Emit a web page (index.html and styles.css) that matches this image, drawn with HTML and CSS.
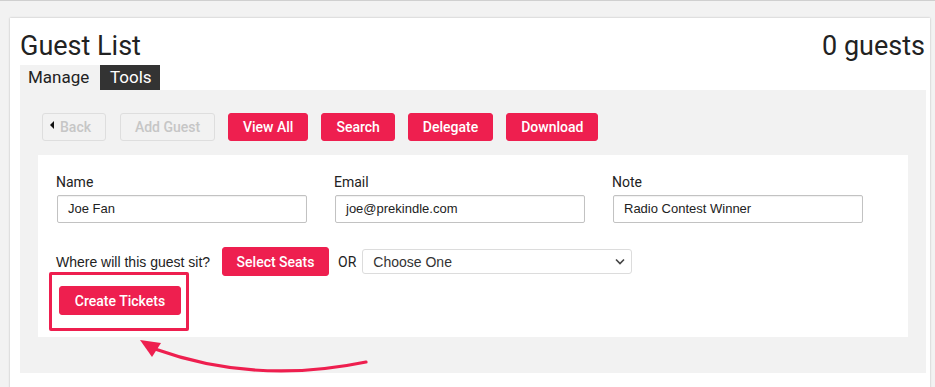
FILE: index.html
```html
<!DOCTYPE html>
<html>
<head>
<meta charset="utf-8">
<link rel="stylesheet" href="styles.css">
</head>
<body>
<div class="card">
  <div class="header">
    <h1 class="title">Guest List</h1>
    <div class="count">0 guests</div>
  </div>
  <div class="tabs">
    <div class="tab tab-active">Manage</div>
    <div class="tab tab-dark">Tools</div>
  </div>
  <div class="panel">
    <div class="toolbar">
      <button class="btn btn-disabled btn-back"><span class="tri"></span>Back</button>
      <button class="btn btn-disabled btn-add">Add Guest</button>
      <button class="btn btn-red">View All</button>
      <button class="btn btn-red">Search</button>
      <button class="btn btn-red">Delegate</button>
      <button class="btn btn-red">Download</button>
    </div>
    <div class="form-box">
      <div class="fields">
        <div class="field">
          <label class="label">Name</label>
          <div class="input">Joe Fan</div>
        </div>
        <div class="field">
          <label class="label">Email</label>
          <div class="input">joe@prekindle.com</div>
        </div>
        <div class="field">
          <label class="label">Note</label>
          <div class="input">Radio Contest Winner</div>
        </div>
      </div>
      <div class="seat-row">
        <span class="question">Where will this guest sit?</span>
        <button class="btn btn-red btn-seats">Select Seats</button>
        <span class="or">OR</span>
        <div class="select">
          <span>Choose One</span>
          <svg class="chev" width="10" height="7" viewBox="0 0 10 7"><path d="M1 1.5 L5 5.5 L9 1.5" fill="none" stroke="#444" stroke-width="1.6"/></svg>
        </div>
      </div>
      <div class="highlight">
        <button class="btn btn-red btn-create">Create Tickets</button>
      </div>
    </div>
  </div>
</div>
<svg class="arrow" width="250" height="50" viewBox="130 330 250 50">
  <path d="M155 349 Q 255 385 366 362" fill="none" stroke="#ee1f4f" stroke-width="3.2" stroke-linecap="round"/>
  <polygon points="140,340 161,343 152,357" fill="#ee1f4f"/>
</svg>
</body>
</html>
```

FILE: styles.css
```css
html, body {
  margin: 0;
  padding: 0;
}
body {
  background: #f2f2f2;
  border-top: 1px solid #cfcfcf;
  font-family: Roboto, "Liberation Sans", Arial, sans-serif;
  color: #222;
  width: 935px;
  height: 386px;
  overflow: hidden;
  position: relative;
}
.card {
  margin: 17px 5px 0 10px;
  background: #fff;
  box-shadow: 0 0 2px rgba(0, 0, 0, 0.25);
  padding: 9px 4px 20px 10px;
}
.header {
  display: flex;
  justify-content: space-between;
  align-items: flex-start;
  height: 38px;
}
.title, .count {
  margin: 0;
  font-weight: 400;
  font-size: 27px;
  line-height: 38px;
  color: #222;
}
.count {
  margin-right: 1px;
}
.tabs {
  display: flex;
  height: 25px;
}
.tab {
  font-size: 17px;
  line-height: 25px;
  padding: 0 8px;
}
.tab-active {
  width: 80px;
  box-sizing: border-box;
  background: #f2f2f2;
  color: #222;
}
.tab-dark {
  width: 60px;
  box-sizing: border-box;
  background: #333;
  color: #fff;
  padding: 0 10px;
}
.panel {
  background: #f2f2f2;
  padding: 23px 18px 36px 18px;
}
.toolbar {
  display: flex;
  gap: 13px;
  margin-left: 4px;
  margin-bottom: 14px;
}
.btn {
  font-family: Roboto, "Liberation Sans", Arial, sans-serif;
  font-size: 14px;
  font-weight: 500;
  height: 28px;
  border-radius: 3px;
  padding: 0 14px;
  border: 1px solid transparent;
  box-sizing: border-box;
  cursor: pointer;
}
.btn-red {
  background: #ee1f4f;
  color: #fff;
  border-color: #ee1f4f;
}
.btn-disabled {
  background: #f2f2f2;
  color: #c6c6c6;
  border-color: #dedede;
}
.btn-back {
  display: flex;
  align-items: center;
  padding: 0 13px 0 7px;
  width: 64px;
  margin-right: 1px;
}
.btn-add {
  width: 95px;
  padding: 0;
}
.tri {
  width: 0;
  height: 0;
  border-top: 4px solid transparent;
  border-bottom: 4px solid transparent;
  border-right: 4px solid #111;
  margin: -4px 6px 0 0;
}
.form-box {
  background: #fff;
  padding: 19px 18px 6px 18px;
}
.fields {
  display: flex;
  gap: 28px;
  margin-left: 1px;
}
.field {
  display: flex;
  flex-direction: column;
  width: 250px;
}
.label {
  font-size: 14px;
  line-height: 16px;
  color: #222;
  margin: 0 0 5px -1px;
}
.input {
  height: 28px;
  box-sizing: border-box;
  border: 1px solid #c2c2c2;
  border-radius: 2px;
  box-shadow: inset 0 1px 1px rgba(0, 0, 0, 0.06);
  font-family: "Liberation Sans", Arial, sans-serif;
  font-size: 13px;
  line-height: 26px;
  color: #222;
  padding: 0 10px;
}
.seat-row {
  display: flex;
  align-items: center;
  margin-top: 24px;
  height: 29px;
}
.question {
  font-family: "Liberation Sans", Arial, sans-serif;
  font-size: 14px;
  color: #222;
  margin-right: 12px;
}
.btn-seats {
  height: 29px;
  width: 107px;
  padding: 0;
}
.or {
  font-size: 14px;
  margin: 0 6px 0 9px;
  color: #222;
}
.select {
  width: 270px;
  height: 25px;
  box-sizing: border-box;
  border: 1px solid #dcdcdc;
  border-radius: 3px;
  display: flex;
  align-items: center;
  justify-content: space-between;
  padding: 0 6px 0 10px;
  font-family: "Liberation Sans", Arial, sans-serif;
  font-size: 14px;
  color: #333;
}
.highlight {
  display: inline-block;
  border: 3px solid #ee1f4f;
  border-radius: 2px;
  padding: 11px 5px 13px 7px;
  margin: -4px 0 0 -7px;
}
.btn-create {
  width: 122px;
  height: 29px;
  padding: 0;
  display: block;
}
.arrow {
  position: absolute;
  left: 130px;
  top: 329px;
}
```
